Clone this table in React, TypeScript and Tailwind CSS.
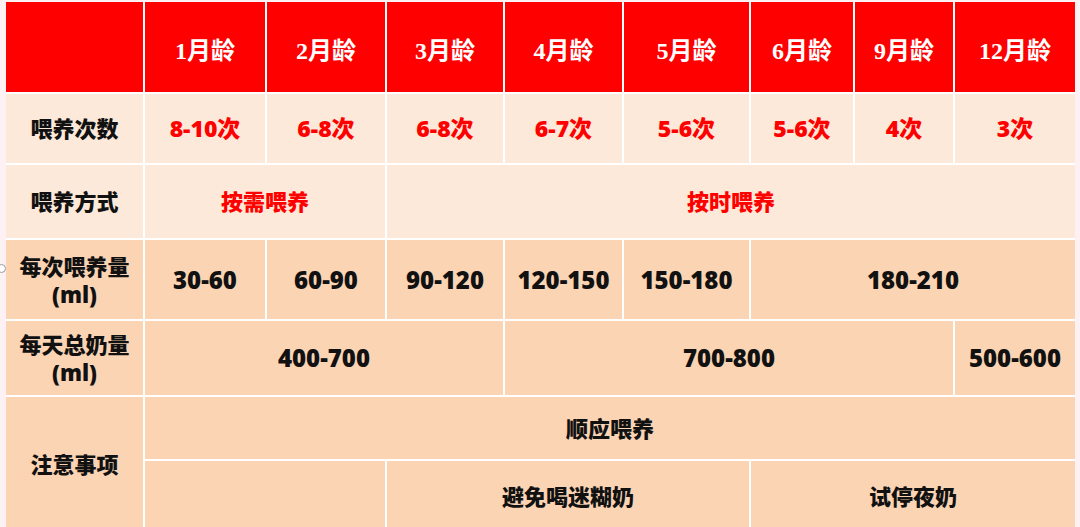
const months = ["1", "2", "3", "4", "5", "6", "9", "12"];
const times = ["8-10次", "6-8次", "6-8次", "6-7次", "5-6次", "5-6次", "4次", "3次"];

const light = "bg-[#fde9d9]";
const peach = "bg-[#fbd4b4]";

function Cell({
  className = "",
  children,
}: {
  className?: string;
  children?: React.ReactNode;
}) {
  return (
    <div className={`flex items-center justify-center text-center ${className}`}>
      {children}
    </div>
  );
}

export default function App() {
  return (
    <div className="relative h-[527px] w-[1080px] overflow-hidden bg-[#fdf1f3] pl-[6px] pt-[2px] font-['Open_Sans','Noto_Sans_CJK_SC',sans-serif] font-bold">
      {/* little selection handle on the left edge */}
      <div className="absolute left-[-3px] top-[264px] h-[9px] w-[9px] rounded-full border border-[#9a9a9a] bg-white" />

      <div className="grid w-[1069px] grid-cols-[137px_120px_118px_116px_117px_125px_102px_98px_120px] grid-rows-[90px_69px_73px_79px_74px_62px_70px] gap-[2px] bg-white">
        {/* Header */}
        <Cell className="bg-[#ff0000]" />
        {months.map((m) => (
          <Cell
            key={m}
            className="bg-[#ff0000] pt-[8px] font-['Liberation_Serif','Noto_Sans_CJK_SC',serif] text-[24px] text-white"
          >
            {m}月龄
          </Cell>
        ))}

        {/* 喂养次数 */}
        <Cell className={`${light} text-[22px] font-black text-[#111]`}>喂养次数</Cell>
        {times.map((t, i) => (
          <Cell key={i} className={`${light} text-[23px] font-extrabold text-[#f00]`}>
            {t}
          </Cell>
        ))}

        {/* 喂养方式 */}
        <Cell className={`${light} text-[22px] font-black text-[#111]`}>喂养方式</Cell>
        <Cell className={`${light} col-span-2 text-[22px] font-black text-[#f00]`}>按需喂养</Cell>
        <Cell className={`${light} col-span-6 text-[22px] font-black text-[#f00]`}>按时喂养</Cell>

        {/* 每次喂养量 */}
        <Cell className={`${peach} flex-col text-[22px] font-black leading-[28px] text-[#111]`}>
          <span>每次喂养量</span>
          <span>(ml)</span>
        </Cell>
        {["30-60", "60-90", "90-120", "120-150", "150-180"].map((v) => (
          <Cell key={v} className={`${peach} text-[24px] font-extrabold text-[#111]`}>
            {v}
          </Cell>
        ))}
        <Cell className={`${peach} col-span-3 text-[24px] font-extrabold text-[#111]`}>180-210</Cell>

        {/* 每天总奶量 */}
        <Cell className={`${peach} flex-col text-[22px] font-black leading-[28px] text-[#111]`}>
          <span>每天总奶量</span>
          <span>(ml)</span>
        </Cell>
        <Cell className={`${peach} col-span-3 text-[24px] font-extrabold text-[#111]`}>400-700</Cell>
        <Cell className={`${peach} col-span-4 text-[24px] font-extrabold text-[#111]`}>700-800</Cell>
        <Cell className={`${peach} text-[24px] font-extrabold text-[#111]`}>500-600</Cell>

        {/* 注意事项 */}
        <Cell className={`${peach} row-span-2 text-[22px] font-black text-[#111]`}>注意事项</Cell>
        <Cell className={`${peach} col-span-8 text-[22px] font-black text-[#111]`}>顺应喂养</Cell>
        <Cell className={`${peach} col-span-2`} />
        <Cell className={`${peach} col-span-3 text-[22px] font-black text-[#111]`}>避免喝迷糊奶</Cell>
        <Cell className={`${peach} col-span-3 text-[22px] font-black text-[#111]`}>试停夜奶</Cell>
      </div>
    </div>
  );
}
